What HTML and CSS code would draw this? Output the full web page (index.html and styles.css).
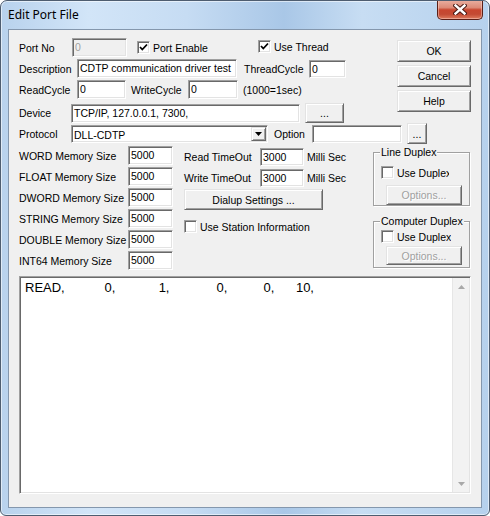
FILE: index.html
```html
<!DOCTYPE html>
<html>
<head>
<meta charset="utf-8">
<title>Edit Port File</title>
<link rel="stylesheet" href="styles.css">
</head>
<body>
<div class="window">
  <div class="titlebar">
    <span class="title">Edit Port File</span>
    <div class="close">
      <svg width="14" height="11" viewBox="0 0 14 11">
        <path d="M2.5 1.5 L11.5 9.5 M11.5 1.5 L2.5 9.5" stroke="#4a1a14" stroke-width="4.4" stroke-linecap="square"/>
        <path d="M2.5 1.5 L11.5 9.5 M11.5 1.5 L2.5 9.5" stroke="#ffffff" stroke-width="2.4" stroke-linecap="square"/>
      </svg>
    </div>
  </div>
  <div class="client">
    <div class="top">
      <div class="top-left">
        <div class="row r1">
          <span class="lbl w53">Port No</span>
          <span class="field disabled w55">0</span>
          <div class="cb cb-pe"><span class="box"><svg width="11" height="11" viewBox="0 0 11 11"><path d="M2 5 L4.3 7.5 L9 2.5" fill="none" stroke="#000" stroke-width="1.8"/></svg></span>Port Enable</div>
          <div class="cb cb-ut"><span class="box"><svg width="11" height="11" viewBox="0 0 11 11"><path d="M2 5 L4.3 7.5 L9 2.5" fill="none" stroke="#000" stroke-width="1.8"/></svg></span>Use Thread</div>
        </div>
        <div class="row r2">
          <span class="lbl w58">Description</span>
          <span class="field w160">CDTP communication driver test</span>
          <span class="lbl ml7 w65">ThreadCycle</span>
          <span class="field w37 h18">0</span>
        </div>
        <div class="row r3">
          <span class="lbl w58">ReadCycle</span>
          <span class="field w49">0</span>
          <span class="lbl ml5 w57">WriteCycle</span>
          <span class="field w50">0</span>
          <span class="lbl ml5">(1000=1sec)</span>
        </div>
        <div class="row r4">
          <span class="lbl w52">Device</span>
          <span class="field w229">TCP/IP, 127.0.0.1, 7300,</span>
          <span class="btn ml5 btn-dev">...</span>
        </div>
      </div>
      <div class="buttons">
        <span class="btn btn-main">OK</span>
        <span class="btn btn-main">Cancel</span>
        <span class="btn btn-main">Help</span>
      </div>
    </div>
    <div class="row r5">
      <span class="lbl w52">Protocol</span>
      <div class="field select w197">
        <span class="select-text">DLL-CDTP</span>
        <span class="btn select-btn"><svg width="7" height="4" viewBox="0 0 7 4"><path d="M0 0 H7 L3.5 4 Z" fill="#000"/></svg></span>
      </div>
      <span class="lbl ml6 w38">Option</span>
      <span class="field w90 h18"></span>
      <span class="btn ml5 btn-opt">...</span>
    </div>
    <div class="middle">
      <div class="col1">
        <div class="row"><span class="lbl w109">WORD Memory Size</span><span class="field w45">5000</span></div>
        <div class="row"><span class="lbl w109">FLOAT Memory Size</span><span class="field w45">5000</span></div>
        <div class="row"><span class="lbl w109">DWORD Memory Size</span><span class="field w45">5000</span></div>
        <div class="row"><span class="lbl w109">STRING Memory Size</span><span class="field w45">5000</span></div>
        <div class="row"><span class="lbl w109">DOUBLE Memory Size</span><span class="field w45">5000</span></div>
        <div class="row"><span class="lbl w109">INT64 Memory Size</span><span class="field w45">5000</span></div>
      </div>
      <div class="col2">
        <div class="row"><span class="lbl w76">Read TimeOut</span><span class="field w44 h18">3000</span><span class="lbl ml3">Milli Sec</span></div>
        <div class="row r-gap"><span class="lbl w76">Write TimeOut</span><span class="field w44 h18">3000</span><span class="lbl ml3">Milli Sec</span></div>
        <span class="btn btn-dial">Dialup Settings ...</span>
        <div class="cb cb-st"><span class="box"></span>Use Station Information</div>
      </div>
      <div class="col3">
        <div class="group g1">
          <span class="gtitle">Line Duplex</span>
          <div class="cb gcb gcb1"><span class="box"></span>Use Duplex</div>
          <span class="btn btn-disabled gopt gopt1">Options...</span>
        </div>
        <div class="group g2">
          <span class="gtitle">Computer Duplex</span>
          <div class="cb gcb gcb2"><span class="box"></span>Use Duplex</div>
          <span class="btn btn-disabled gopt gopt2">Options...</span>
        </div>
      </div>
    </div>
    <div class="memo">
      <div class="memo-text">READ,           0,            1,             0,          0,      10,</div>
      <div class="scroll">
        <span class="sarrow"><svg width="7" height="4" viewBox="0 0 7 4"><path d="M0 4 H7 L3.5 0 Z" fill="#a8a8a8"/></svg></span>
        <span class="sarrow"><svg width="7" height="4" viewBox="0 0 7 4"><path d="M0 0 H7 L3.5 4 Z" fill="#a8a8a8"/></svg></span>
      </div>
    </div>
  </div>
</div>
</body>
</html>
```
FILE: styles.css
```css
body {
  margin: 0;
  background: #ffffff;
  font-family: "Liberation Sans", Arial, sans-serif;
  font-size: 10.5px;
  color: #000;
}

.window {
  width: 490px;
  height: 516px;
  box-sizing: border-box;
  border: 1px solid #4e5d70;
  border-radius: 7px 7px 6px 6px;
  background: linear-gradient(90deg, #b8d2ed 0%, #d2e5f8 18%, #c6dcf3 38%, #a9c7e7 58%, #c7ddf3 74%, #b6d1ed 100%);
  box-shadow: inset 0 0 0 1px rgba(255, 255, 255, 0.55);
  display: flex;
  flex-direction: column;
  overflow: hidden;
}

.titlebar {
  height: 28px;
  display: flex;
  align-items: flex-start;
  flex-shrink: 0;
}

.title {
  font-family: "Noto Sans", "Open Sans", sans-serif;
  font-size: 12px;
  line-height: 27px;
  padding-left: 7px;
  color: #000;
}

.close {
  margin-left: auto;
  margin-right: 6px;
  margin-top: -1px;
  width: 46px;
  height: 20px;
  box-sizing: border-box;
  border: 1px solid #5a1f17;
  border-top: none;
  border-radius: 0 0 5px 5px;
  background: linear-gradient(180deg, #eab0a2 0%, #dc8a77 40%, #c8462f 52%, #c34a33 75%, #dd7b5e 100%);
  box-shadow: inset 0 0 0 1px rgba(255, 220, 210, 0.45);
  display: flex;
  align-items: center;
  justify-content: center;
}

.client {
  margin: 0 7px;
  height: 479px;
  box-sizing: border-box;
  border: 1px solid #8497ad;
  background: #f0f0f0;
  padding: 8px 0 0 10px;
  flex-shrink: 0;
}

.top {
  display: flex;
  align-items: flex-start;
}

.top-left {
  width: 378px;
}

.buttons {
  margin-top: 2px;
  display: flex;
  flex-direction: column;
  gap: 3px;
}

.row {
  display: flex;
  align-items: center;
  height: 19px;
}

.r2, .r3 { margin-top: 2px; }
.r4 { margin-top: 4px; height: 20px; }
.r5 { height: 21px; }
.r-gap { margin-top: 2px; }

.lbl {
  flex-shrink: 0;
  white-space: nowrap;
}

.w37 { width: 37px; }
.w38 { width: 38px; }
.w44 { width: 44px; }
.w45 { width: 45px; }
.w49 { width: 49px; }
.w50 { width: 50px; }
.w52 { width: 52px; }
.w53 { width: 53px; }
.w55 { width: 55px; }
.w57 { width: 57px; }
.w58 { width: 58px; }
.w65 { width: 65px; }
.w76 { width: 76px; }
.w90 { width: 90px; }
.w109 { width: 109px; }
.w160 { width: 160px; }
.w197 { width: 197px; }
.w229 { width: 229px; }
.ml3 { margin-left: 3px; }
.ml5 { margin-left: 5px; }
.ml6 { margin-left: 6px; }
.ml7 { margin-left: 7px; }

.field {
  box-sizing: border-box;
  height: 19px;
  background: #fff;
  border: 1px solid;
  border-color: #a0a0a0 #ffffff #ffffff #a0a0a0;
  box-shadow: inset 1px 1px #696969, inset -1px -1px #e3e3e3;
  padding: 0 0 0 2px;
  line-height: 17px;
  white-space: nowrap;
  overflow: hidden;
  flex-shrink: 0;
}

.h18 { height: 18px; line-height: 16px; }

.field.disabled {
  background: #f0f0f0;
  color: #a0a0a0;
}

.select {
  display: flex;
  height: 18px;
  padding: 1px 1px 1px 2px;
  line-height: 16px;
}

.select-text {
  flex: 1;
}

.select-btn {
  width: 15px;
  height: 14px;
}

.btn {
  box-sizing: border-box;
  background: #f0f0f0;
  border: 1px solid;
  border-color: #e3e3e3 #696969 #696969 #e3e3e3;
  box-shadow: inset 1px 1px #ffffff, inset -1px -1px #a0a0a0;
  display: flex;
  align-items: center;
  justify-content: center;
  flex-shrink: 0;
  white-space: nowrap;
}

.btn-main {
  width: 74px;
  height: 22px;
}

.btn-dev {
  width: 39px;
  height: 20px;
}

.btn-opt {
  width: 20px;
  height: 21px;
}

.btn-dial {
  width: 139px;
  height: 21px;
  margin-top: 2px;
}

.btn-disabled {
  color: #a0a0a0;
  text-shadow: 1px 1px #ffffff;
}

.cb {
  display: flex;
  align-items: center;
  white-space: nowrap;
  flex-shrink: 0;
}

.box {
  width: 13px;
  height: 13px;
  box-sizing: border-box;
  background: #fff;
  border: 1px solid;
  border-color: #a0a0a0 #ffffff #ffffff #a0a0a0;
  box-shadow: inset 1px 1px #696969, inset -1px -1px #e3e3e3;
  margin-right: 3px;
  flex-shrink: 0;
  display: flex;
  align-items: center;
  justify-content: center;
}

.cb-pe {
  margin-left: 10px;
  width: 121px;
}

.cb-ut {
  margin-top: -2px;
}

.middle {
  display: flex;
  align-items: flex-start;
  margin-top: 2px;
}

.col1 {
  width: 154px;
  display: flex;
  flex-direction: column;
  gap: 2px;
}

.col2 {
  margin-left: 11px;
  width: 189px;
  margin-top: 1px;
  display: flex;
  flex-direction: column;
  align-items: flex-start;
}

.cb-st {
  margin-top: 7px;
  height: 19px;
}

.col3 {
  width: 97px;
  margin-top: 6px;
}

.group {
  box-sizing: border-box;
  border: 1px solid #a0a0a0;
  box-shadow: inset 1px 1px #ffffff, 1px 1px #ffffff;
  padding: 0 0 0 7px;
  display: flex;
  flex-direction: column;
  align-items: flex-start;
}

.g1 { height: 54px; }
.g2 { height: 47px; margin-top: 15px; }

.gtitle {
  margin: -7px 0 0 -1px;
  padding: 0 1px;
  background: #f0f0f0;
  line-height: 13px;
  white-space: nowrap;
}

.gcb {
  overflow: hidden;
}

.gcb1 {
  margin-top: 4px;
  height: 19px;
  width: 68px;
}

.gcb2 {
  height: 17px;
}

.gopt {
  margin-left: 5px;
  width: 76px;
}

.gopt1 { margin-top: 3px; height: 20px; }
.gopt2 { margin-top: 1px; height: 19px; }

.memo {
  margin-top: 6px;
  width: 452px;
  height: 218px;
  box-sizing: border-box;
  background: #fff;
  border: 1px solid;
  border-color: #a0a0a0 #ffffff #ffffff #a0a0a0;
  box-shadow: inset 1px 1px #696969, inset -1px -1px #e3e3e3;
  padding: 1px;
  display: flex;
}

.memo-text {
  flex: 1;
  padding: 2px 0 0 4px;
  font-family: "Liberation Sans", Arial, sans-serif;
  font-size: 13px;
  line-height: 15px;
  white-space: pre;
  color: #000;
}

.scroll {
  width: 16px;
  background: #f2f2f2;
  border-left: 1px solid #e6e6e6;
  display: flex;
  flex-direction: column;
  justify-content: space-between;
}

.sarrow {
  height: 17px;
  display: flex;
  align-items: center;
  justify-content: center;
}
```
